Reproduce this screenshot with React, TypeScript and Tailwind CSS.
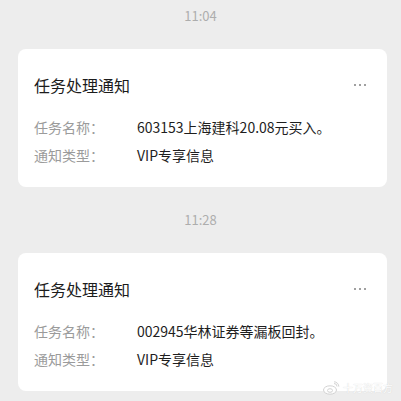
import React from "react";

interface Notice {
  time: string;
  title: string;
  taskName: string;
  noticeType: string;
}

const notices: Notice[] = [
  {
    time: "11:04",
    title: "任务处理通知",
    taskName: "603153上海建科20.08元买入。",
    noticeType: "VIP专享信息",
  },
  {
    time: "11:28",
    title: "任务处理通知",
    taskName: "002945华林证券等漏板回封。",
    noticeType: "VIP专享信息",
  },
];

const font = {
  fontFamily: '"Microsoft YaHei", "Noto Sans CJK SC", "Noto Sans", sans-serif',
};

function MoreDots() {
  return (
    <div className="flex items-center gap-[3px]">
      <span className="h-[2px] w-[2px] bg-[#a0a0a0]" />
      <span className="h-[2px] w-[2px] bg-[#a0a0a0]" />
      <span className="h-[2px] w-[2px] bg-[#a0a0a0]" />
    </div>
  );
}

function NoticeCard({ n }: { n: Notice }) {
  return (
    <div className="ml-[18px] mr-[14px] h-[138px] rounded-[8px] bg-white pl-[16px] pr-[21px] pt-[24px]">
      {/* Title row */}
      <div className="flex h-[24px] items-center justify-between">
        <span className="text-[16px] leading-[24px] text-[#1c1c1c]">{n.title}</span>
        <MoreDots />
      </div>

      {/* Details */}
      <div className="mt-[16px]">
        <div className="flex h-[28px] items-center text-[14px]">
          <span className="w-[103px] shrink-0 text-[#9b9b9b]">任务名称：</span>
          <span className="text-[#1e1e1e]">{n.taskName}</span>
        </div>
        <div className="flex h-[28px] items-center text-[14px]">
          <span className="w-[103px] shrink-0 text-[#9b9b9b]">通知类型：</span>
          <span className="text-[#1e1e1e]">{n.noticeType}</span>
        </div>
      </div>
    </div>
  );
}

export default function App() {
  return (
    <div className="relative h-[401px] w-[401px] overflow-hidden bg-[#ededed]" style={font}>
      {notices.map((n, i) => (
        <div key={i} className={i === 0 ? "pt-[8px]" : "pt-[25px]"}>
          <div className="h-[16px] text-center text-[13px] leading-[16px] text-[#adadad]">
            {n.time}
          </div>
          <div className="mt-[25px]">
            <NoticeCard n={n} />
          </div>
        </div>
      ))}

      {/* watermark */}
      <div className="absolute bottom-[6px] right-[8px] flex items-center gap-[3px] text-[10px] text-white opacity-90 [text-shadow:0_0_1px_#c8c8c8]">
        <svg width="18" height="14" viewBox="0 0 18 14" fill="none" stroke="#cfcfcf" strokeWidth="1">
          <ellipse cx="8" cy="9" rx="6.5" ry="4.2" fill="#fff" />
          <ellipse cx="8" cy="9.5" rx="2.5" ry="1.8" />
          <path d="M12 2.5a3 3 0 0 1 3 3" />
          <path d="M12 0.8a4.8 4.8 0 0 1 4.8 4.8" />
        </svg>
        <span>十万资百方</span>
      </div>
    </div>
  );
}
